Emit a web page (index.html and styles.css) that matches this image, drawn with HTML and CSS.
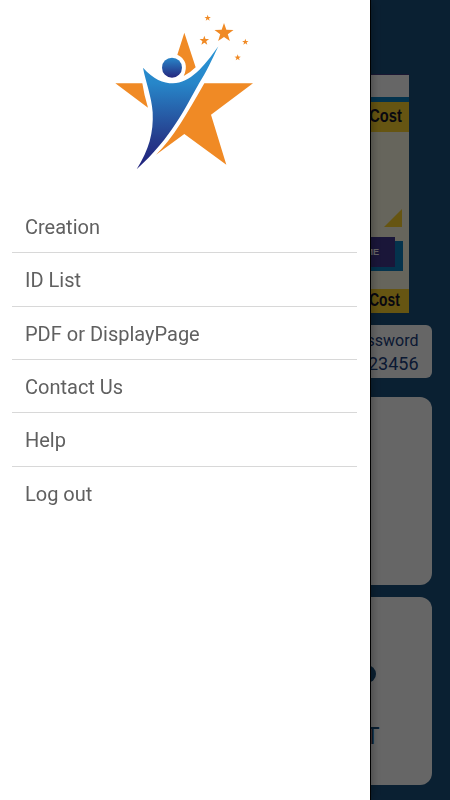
FILE: index.html
```html
<!DOCTYPE html>
<html lang="en">
<head>
    <meta charset="UTF-8">
    <meta name="viewport" content="width=device-width, initial-scale=1.0">
    <title>Menu</title>
    <link rel="stylesheet" href="styles.css">
</head>
<body>
    <div class="page">
        <div class="banner">
            <div class="banner-head"></div>
            <div class="banner-cost"><span>Cost</span></div>
            <div class="banner-body">
                <div class="corner"></div>
                <div class="ribbon">NAME</div>
            </div>
            <div class="banner-cost banner-foot"><span>Cost</span></div>
        </div>
        <div class="account">
            <div>Password</div>
            <div class="value">123456</div>
        </div>
        <div class="card"></div>
        <div class="card">
            <div class="dot"></div>
            <div class="card-title">ID LIST</div>
        </div>
    </div>

    <div class="mask"></div>

    <div class="drawer">
        <svg class="logo" viewBox="0 0 510 540">
            <defs>
                <linearGradient id="body" x1="0" y1="0" x2="0" y2="1">
                    <stop offset="0" stop-color="#2a95d5"/>
                    <stop offset=".3" stop-color="#2786c9"/>
                    <stop offset=".75" stop-color="#263c8c"/>
                    <stop offset="1" stop-color="#20207c"/>
                </linearGradient>
                <linearGradient id="head" x1="0" y1="0" x2="0" y2="1">
                    <stop offset="0" stop-color="#2886c9"/>
                    <stop offset="1" stop-color="#25287f"/>
                </linearGradient>
                <path id="star" d="M0-10 2.35-3.24 9.51-3.09 3.8 1.24 5.88 8.09 0 4-5.88 8.09-3.8 1.24-9.51-3.09-2.35-3.24Z"/>
            </defs>
            <g fill="#f08a25">
                <path d="M253 98L287 202Q270 219 251 228Q261 207 256 190Q249 171 232 164Z"/>
                <path d="M46 250H127Q132 285 144 323Z"/>
                <path d="M313 250H459L333 344L379 494L253 402L168 464C218 416 262 340 313 250Z"/>
                <use href="#star" transform="translate(372 99) scale(3)"/>
                <use href="#star" transform="translate(323 54)"/>
                <use href="#star" transform="translate(313 122) scale(1.5)"/>
                <use href="#star" transform="translate(436 126)"/>
                <use href="#star" transform="translate(413 173)"/>
            </g>
            <circle cx="216" cy="203" r="30" fill="url(#head)"/>
            <path fill="url(#body)" d="M129 203C160 238 190 250 219 250C270 249 311 202 355 139C336 180 318 218 299 247C254 326 216 412 110 508C147 450 161 398 158 337C155 290 137 246 129 203Z"/>
        </svg>
        <ul class="menu">
            <li>Creation</li>
            <li>ID List</li>
            <li>PDF or DisplayPage</li>
            <li>Contact Us</li>
            <li>Help</li>
            <li>Log out</li>
        </ul>
    </div>
</body>
</html>
```
FILE: styles.css
```css
*{
    margin: 0;
    padding: 0;
    box-sizing: border-box;
}
body{
    height: 800px;
    overflow: hidden;
    background-color: #1b507d;
    font-family: Roboto, "Liberation Sans", sans-serif;
}
.page{
    height: 800px;
    padding: 74px 18.5px 0;
}
.banner{
    height: 239px;
    margin: 0 22.5px 12px;
    display: flex;
    flex-direction: column;
    background-color: #fffde6;
}
.banner-head{
    height: 28px;
    background-color: #fff;
    border-top: 1px solid #413a80;
    border-bottom: 5px solid #0a80c0;
}
.banner-cost{
    height: 30px;
    padding-right: 7px;
    background-color: #ffd52d;
    color: #14142a;
    font: bold 17px/30px "Liberation Sans", sans-serif;
    text-align: right;
}
.banner-cost span{
    display: inline-block;
    transform: scale(.86, 1.06);
    transform-origin: right;
}
.banner-foot{
    height: 24px;
    padding-right: 9px;
    line-height: 24px;
}
.banner-foot span{
    transform: scale(.81, 1.06);
}
.banner-body{
    flex: 1;
    padding: 77px 6px 0 0;
    display: flex;
    flex-direction: column;
    align-items: flex-end;
}
.corner{
    width: 18px;
    height: 18px;
    margin-right: 1px;
    background-color: #ffd52d;
    clip-path: polygon(100% 0, 100% 100%, 0 100%);
}
.ribbon{
    width: 100px;
    height: 30px;
    margin: 10px 8px 0 0;
    padding-right: 16px;
    background-color: #41378f;
    box-shadow: 8px 4px 0 #0a80c0;
    color: #fff;
    font: bold 9px/30px "Liberation Sans", sans-serif;
    text-align: right;
}
.account{
    height: 53px;
    margin-bottom: 19px;
    padding: 5px 13px 0 0;
    border-radius: 6px;
    background-color: #fff;
    color: #1b4080;
    font-size: 16px;
    line-height: 22px;
    text-align: right;
}
.account .value{
    font-size: 18px;
    line-height: 24px;
}
.card{
    height: 187.5px;
    margin-bottom: 12.5px;
    border-radius: 12px;
    background-color: #fff;
    display: flex;
    flex-direction: column;
    align-items: flex-end;
}
.dot{
    width: 18px;
    height: 18px;
    margin: 67.5px 55.5px 0 0;
    border-radius: 50%;
    background-color: #1b507d;
}
.card-title{
    margin: 39.5px 52px 0 0;
    color: #1b507d;
    font-size: 24px;
    line-height: 28px;
}
.mask{
    position: fixed;
    inset: 0;
    background-color: rgba(0, 0, 0, .6);
}
/* side menu over the dimmed page */
.drawer{
    position: fixed;
    top: 0;
    left: 0;
    width: 371px;
    height: 100%;
    background-color: #fff;
    border-right: 1px solid #000;
    box-shadow: 0 0 10px rgba(0, 0, 0, .4);
}
.logo{
    display: block;
    width: 170px;
    height: 180px;
    margin-left: 100px;
}
.menu{
    padding: 20px 13px 0 12px;
    list-style: none;
}
.menu li{
    height: 53.35px;
    padding-left: 13px;
    border-bottom: 1px solid #d8d8d8;
    color: #606060;
    font-size: 20px;
    line-height: 55px;
}
.menu li:last-child{
    border-bottom: none;
}
```
